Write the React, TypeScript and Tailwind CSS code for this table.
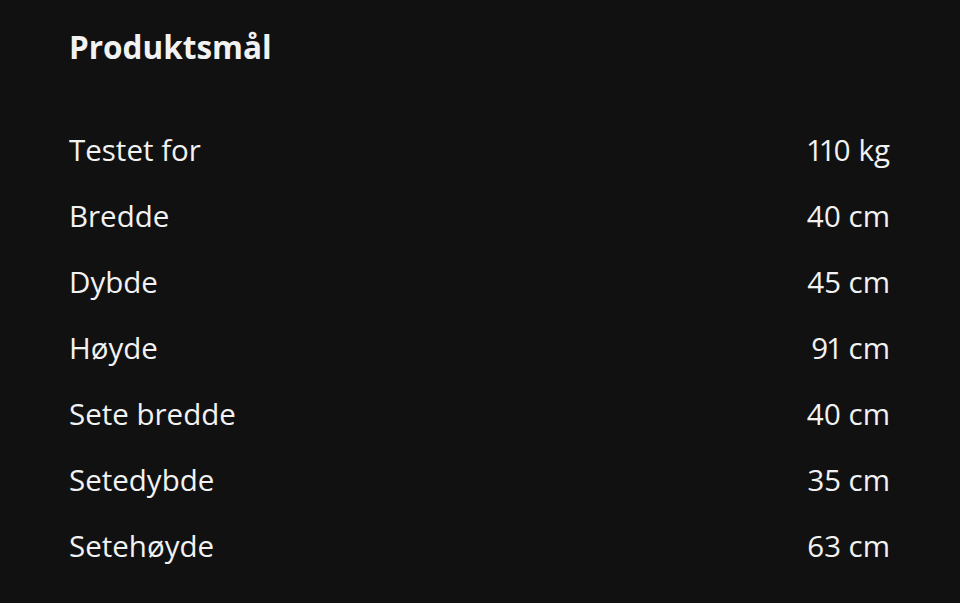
const rows = [
  { label: 'Testet for', value: '110 kg' },
  { label: 'Bredde', value: '40 cm' },
  { label: 'Dybde', value: '45 cm' },
  { label: 'Høyde', value: '91 cm' },
  { label: 'Sete bredde', value: '40 cm' },
  { label: 'Setedybde', value: '35 cm' },
  { label: 'Setehøyde', value: '63 cm' },
];

export default function App() {
  return (
    <div className="min-h-[603px] w-full bg-[#111111] text-[#f2f2f2] font-['Open_Sans',sans-serif] proportional-nums pl-[69px] pr-[70px] pt-[27px]">
      <h2 className="text-[31.5px] leading-[40px] font-bold">Produktsmål</h2>
      <div className="mt-[50px] flex flex-col">
        {rows.map(row => (
          <div key={row.label} className="flex justify-between items-center h-[66px] text-[29.5px]">
            <span>{row.label}</span>
            <span>{row.value}</span>
          </div>
        ))}
      </div>
    </div>
  );
}
